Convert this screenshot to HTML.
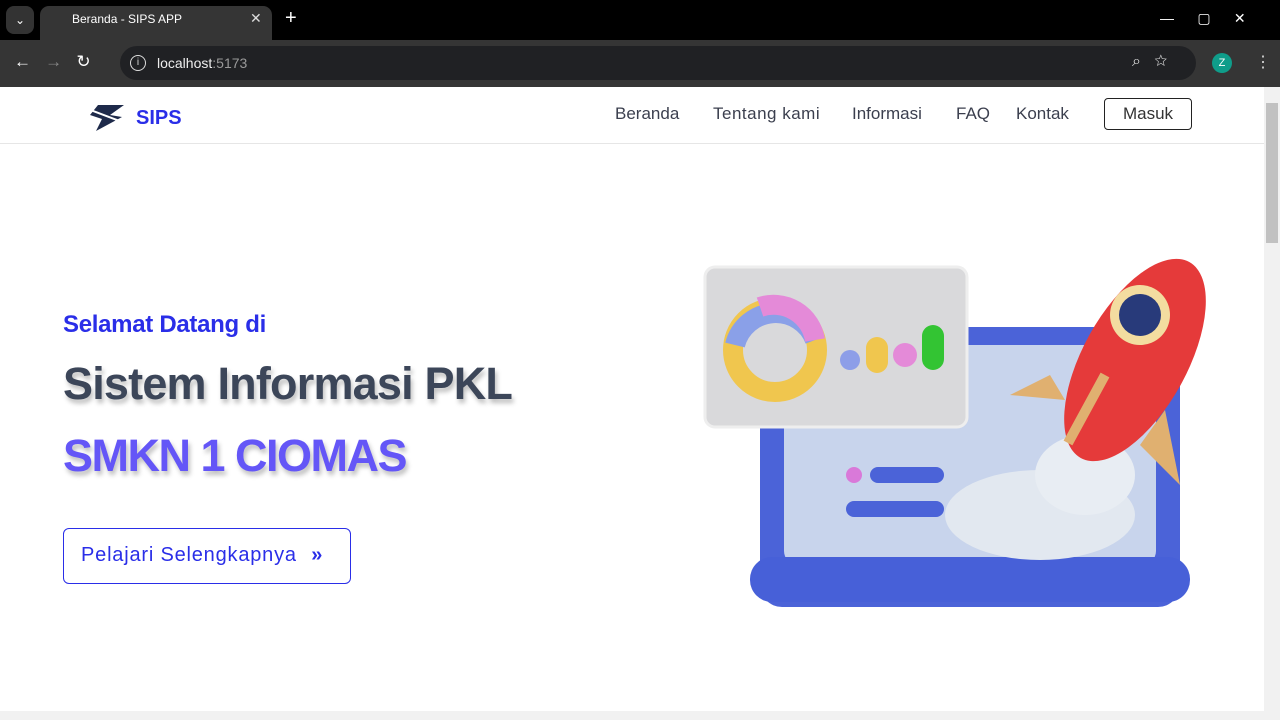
<!DOCTYPE html>
<html><head><meta charset="utf-8"><style>
*{margin:0;padding:0;box-sizing:border-box}
body{width:1280px;height:720px;overflow:hidden;background:#fff;font-family:"Liberation Sans",sans-serif;position:relative}
.abs{position:absolute}
.nav a{position:absolute;top:104px;font-size:17px;color:#3b3f4e}
</style></head><body>
<div class="abs" style="left:0;top:0;width:1280px;height:40px;background:#000"></div>
<div class="abs" style="left:6px;top:6px;width:28px;height:28px;background:#333;border-radius:8px;color:#fff;font-size:12px;text-align:center;line-height:28px">⌄</div>
<div class="abs" style="left:40px;top:6px;width:232px;height:36px;background:#353535;border-radius:9px 9px 0 0"></div>
<div class="abs" style="left:72px;top:12px;color:#fff;font-size:12px">Beranda - SIPS APP</div>
<div class="abs" style="left:250px;top:10px;color:#ddd;font-size:14px">✕</div>
<div class="abs" style="left:285px;top:7px;color:#fff;font-size:20px">+</div>
<div class="abs" style="left:1160px;top:10px;color:#fff;font-size:14px">—&nbsp;&nbsp;&nbsp;&nbsp;&nbsp;&nbsp;▢&nbsp;&nbsp;&nbsp;&nbsp;&nbsp;&nbsp;✕</div>
<div class="abs" style="left:0;top:40px;width:1280px;height:47px;background:#353535"></div>
<div class="abs" style="left:14px;top:52px;color:#fff;font-size:17px">←&nbsp;&nbsp;&nbsp;<span style="color:#888">→</span>&nbsp;&nbsp;&nbsp;↻</div>
<div class="abs" style="left:120px;top:46px;width:1076px;height:34px;background:#202124;border-radius:17px"></div>
<div class="abs" style="left:130px;top:55px;width:16px;height:16px;border:1.5px solid #ddd;border-radius:50%;color:#ddd;font-size:10px;text-align:center;line-height:13px">i</div>
<div class="abs" style="left:157px;top:55px;color:#eee;font-size:14px">localhost<span style="color:#999">:5173</span></div>
<div class="abs" style="left:1132px;top:53px;color:#ddd;font-size:16px">⌕&nbsp;&nbsp;&nbsp;☆</div>
<div class="abs" style="left:1212px;top:53px;width:20px;height:20px;border-radius:50%;background:#0f9d8a;color:#fff;font-size:11px;text-align:center;line-height:20px">Z</div>
<div class="abs" style="left:1255px;top:52px;color:#ddd;font-size:16px">⋮</div>
<div class="abs" style="left:0;top:143px;width:1264px;height:1px;background:#e6e6e6"></div>
<div class="abs" style="left:1264px;top:87px;width:16px;height:633px;background:#f1f1f1"></div>
<div class="abs" style="left:1266px;top:103px;width:12px;height:140px;background:#c1c1c1"></div>
<div class="abs" style="left:0;top:711px;width:1264px;height:9px;background:#f1f1f1"></div>
<svg class="abs" style="left:88px;top:103px" width="42" height="28" viewBox="0 0 42 28"><path d="M10 2L36 2L22 12L34 14L8 28L14 16L2 12Z" fill="#1e2a4a"/><path d="M0 6L42 22" stroke="#fff" stroke-width="2"/></svg>
<div class="abs" style="left:136px;top:107px;font-size:20px;font-weight:bold;color:#2a2ee8">SIPS</div>
<div class="nav"><a style="left:615px">Beranda</a><a style="left:713px;letter-spacing:0.5px">Tentang kami</a><a style="left:852px">Informasi</a><a style="left:956px">FAQ</a><a style="left:1016px">Kontak</a></div>
<div class="abs" style="left:1104px;top:98px;width:88px;height:32px;border:1.5px solid #222;border-radius:4px;font-size:17px;color:#333;text-align:center;line-height:29px">Masuk</div>
<div class="abs" style="left:63px;top:311px;font-size:24px;font-weight:bold;color:#2a2ee8;letter-spacing:-0.3px">Selamat Datang di</div>
<div class="abs" style="left:63px;top:358px;font-size:45px;font-weight:bold;color:#3c4659;letter-spacing:-0.8px;text-shadow:2px 4px 5px rgba(0,0,0,.25)">Sistem Informasi PKL</div>
<div class="abs" style="left:63px;top:430px;font-size:45px;font-weight:bold;color:#6456f7;letter-spacing:-1.5px;text-shadow:2px 4px 5px rgba(0,0,0,.25)">SMKN 1 CIOMAS</div>
<div class="abs" style="left:63px;top:528px;width:288px;height:56px;border:1.5px solid #2a2ee8;border-radius:6px;font-size:20px;color:#2a2ee8;line-height:53px;padding-left:17px;letter-spacing:0.8px">Pelajari Selengkapnya <b style="margin-left:8px">»</b></div>
<svg class="abs" style="left:700px;top:245px" width="510" height="365" viewBox="0 0 510 365">
<rect x="60" y="82" width="420" height="280" rx="22" fill="#4b63d8"/>
<rect x="84" y="100" width="372" height="220" rx="14" fill="#c8d4ec"/>
<rect x="50" y="312" width="440" height="45" rx="22" fill="#4760d8"/>
<rect x="5" y="22" width="262" height="160" rx="10" fill="#d9d9db" stroke="#eee" stroke-width="3"/>
<circle cx="75" cy="105" r="42" fill="none" stroke="#f0c64e" stroke-width="20"/>
<path d="M35 100A42 42 0 0 1 115 95" fill="none" stroke="#8aa0e8" stroke-width="20"/>
<path d="M60 62A42 42 0 0 1 115 95" fill="none" stroke="#e48ad8" stroke-width="20"/>
<circle cx="150" cy="115" r="10" fill="#8d9ee8"/>
<rect x="166" y="92" width="22" height="36" rx="11" fill="#f0c64e"/>
<circle cx="205" cy="110" r="12" fill="#e48ad8"/>
<rect x="222" y="80" width="22" height="45" rx="11" fill="#33c433"/>
<circle cx="154" cy="230" r="8" fill="#d979d9"/>
<rect x="170" y="222" width="74" height="16" rx="8" fill="#4b63d8"/>
<rect x="146" y="256" width="98" height="16" rx="8" fill="#4b63d8"/>
<ellipse cx="340" cy="270" rx="95" ry="45" fill="#e2e8f0"/>
<ellipse cx="385" cy="230" rx="50" ry="40" fill="#e8edf3"/>
<path d="M350 130L310 150L365 155Z" fill="#e0b070"/><path d="M465 165L480 240L440 200Z" fill="#e0b070"/>
<ellipse cx="435" cy="115" rx="52" ry="112" transform="rotate(29 435 115)" fill="#e53a3a"/>
<circle cx="440" cy="70" r="30" fill="#f3dca0"/><circle cx="440" cy="70" r="21" fill="#283a7a"/>
<path d="M405 130L368 198" stroke="#e0b070" stroke-width="10"/>
</svg>
</body></html>
